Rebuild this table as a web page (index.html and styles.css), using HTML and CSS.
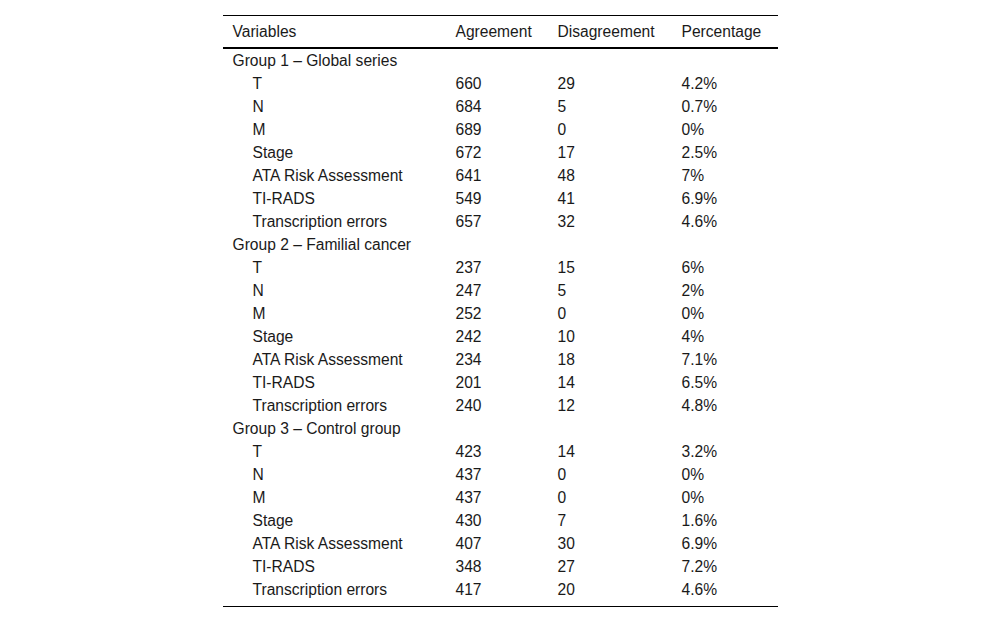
FILE: index.html
```html
<!DOCTYPE html>
<html>
<head>
<meta charset="utf-8">
<link rel="stylesheet" href="styles.css">
</head>
<body>
<div class="wrap">
<table class="data">
  <colgroup>
    <col class="c1"><col class="c2"><col class="c3"><col class="c4">
  </colgroup>
  <thead>
    <tr><th>Variables</th><th>Agreement</th><th>Disagreement</th><th>Percentage</th></tr>
  </thead>
  <tbody>
    <tr><td class="grp" colspan="4">Group 1 – Global series</td></tr>
    <tr><td class="ind">T</td><td>660</td><td>29</td><td>4.2%</td></tr>
    <tr><td class="ind">N</td><td>684</td><td>5</td><td>0.7%</td></tr>
    <tr><td class="ind">M</td><td>689</td><td>0</td><td>0%</td></tr>
    <tr><td class="ind">Stage</td><td>672</td><td>17</td><td>2.5%</td></tr>
    <tr><td class="ind">ATA Risk Assessment</td><td>641</td><td>48</td><td>7%</td></tr>
    <tr><td class="ind">TI-RADS</td><td>549</td><td>41</td><td>6.9%</td></tr>
    <tr><td class="ind">Transcription errors</td><td>657</td><td>32</td><td>4.6%</td></tr>
    <tr><td class="grp" colspan="4">Group 2 – Familial cancer</td></tr>
    <tr><td class="ind">T</td><td>237</td><td>15</td><td>6%</td></tr>
    <tr><td class="ind">N</td><td>247</td><td>5</td><td>2%</td></tr>
    <tr><td class="ind">M</td><td>252</td><td>0</td><td>0%</td></tr>
    <tr><td class="ind">Stage</td><td>242</td><td>10</td><td>4%</td></tr>
    <tr><td class="ind">ATA Risk Assessment</td><td>234</td><td>18</td><td>7.1%</td></tr>
    <tr><td class="ind">TI-RADS</td><td>201</td><td>14</td><td>6.5%</td></tr>
    <tr><td class="ind">Transcription errors</td><td>240</td><td>12</td><td>4.8%</td></tr>
    <tr><td class="grp" colspan="4">Group 3 – Control group</td></tr>
    <tr><td class="ind">T</td><td>423</td><td>14</td><td>3.2%</td></tr>
    <tr><td class="ind">N</td><td>437</td><td>0</td><td>0%</td></tr>
    <tr><td class="ind">M</td><td>437</td><td>0</td><td>0%</td></tr>
    <tr><td class="ind">Stage</td><td>430</td><td>7</td><td>1.6%</td></tr>
    <tr><td class="ind">ATA Risk Assessment</td><td>407</td><td>30</td><td>6.9%</td></tr>
    <tr><td class="ind">TI-RADS</td><td>348</td><td>27</td><td>7.2%</td></tr>
    <tr class="last"><td class="ind">Transcription errors</td><td>417</td><td>20</td><td>4.6%</td></tr>
  </tbody>
</table>
</div>
</body>
</html>
```
FILE: styles.css
```css
html, body {
  margin: 0;
  padding: 0;
  background: #fff;
}
body {
  font-family: "Liberation Sans", Arial, sans-serif;
  font-size: 15.6px;
  color: #1a1a1a;
}
.wrap {
  padding-top: 15px;
}
.data {
  border-collapse: collapse;
  width: 555px;
  margin: 0 auto;
  table-layout: fixed;
  border-top: 1px solid #000;
  border-bottom: 1px solid #000;
}
.c1 { width: 223px; }
.c2 { width: 102px; }
.c3 { width: 124px; }
.c4 { width: 106px; }
.data th {
  font-weight: normal;
  text-align: left;
  height: 31px;
  padding: 0 0 0 10px;
  vertical-align: middle;
  border-bottom: 2px solid #000;
  line-height: 18px;
}
.data td {
  height: 23px;
  padding: 0 0 0 10px;
  line-height: 18px;
  vertical-align: middle;
  white-space: nowrap;
}
.data td.ind {
  padding-left: 30px;
}
.data tr.last td {
  height: 23px;
  padding-bottom: 5px;
}
```
